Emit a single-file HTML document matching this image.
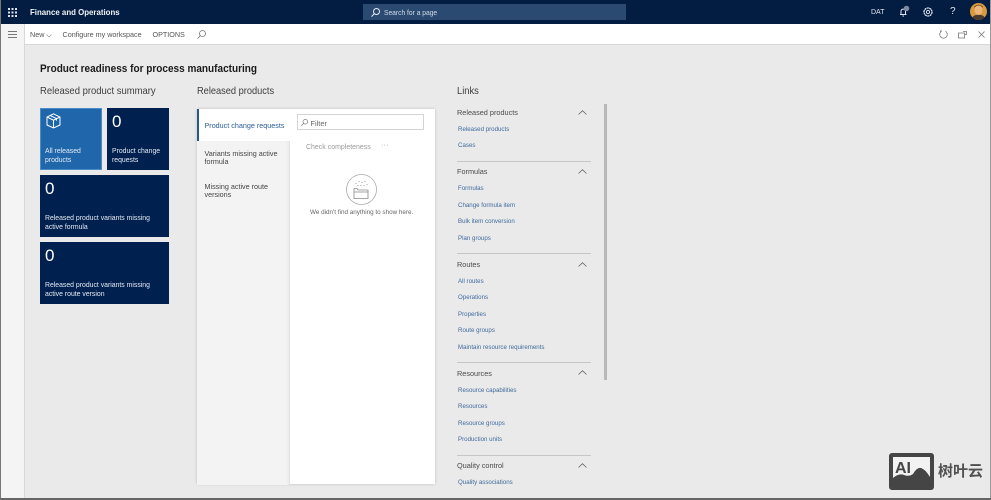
<!DOCTYPE html>
<html lang="en"><head><meta charset="utf-8"><title>Product readiness</title>
<style>
html,body{margin:0;padding:0;width:991px;height:500px;overflow:hidden;background:#eaeaea;font-family:"Liberation Sans","Noto Sans CJK SC",sans-serif}
.a{position:absolute}
.t{position:absolute;white-space:nowrap;line-height:1;transform-origin:left top}
.link{color:#3f6a9c;font-size:6.8px;transform:scaleX(.905)}
.grp{color:#4a4a4a;font-size:7.7px;transform:scaleX(.95)}
.hr{position:absolute;left:457px;width:134px;height:1px;background:#c6c6c6}
.tile{position:absolute;background:#002050}
.tile .n{position:absolute;left:5px;top:5px;font-size:17px;line-height:1;color:#fff}
.tile .l{position:absolute;left:5px;color:#e6ebf3;font-size:7.2px;line-height:9px;white-space:nowrap;transform:scaleX(.955);transform-origin:left top}
svg{position:absolute;overflow:visible}
</style></head><body>
<div class="a" style="left:0;top:0;width:991px;height:24px;background:#021c42"></div>
<svg style="left:8px;top:8px" width="9" height="9" fill="#dfe5ee"><rect x="0" y="0" width="2" height="2"/><rect x="3.5" y="0" width="2" height="2"/><rect x="7" y="0" width="2" height="2"/><rect x="0" y="3.5" width="2" height="2"/><rect x="3.5" y="3.5" width="2" height="2"/><rect x="7" y="3.5" width="2" height="2"/><rect x="0" y="7" width="2" height="2"/><rect x="3.5" y="7" width="2" height="2"/><rect x="7" y="7" width="2" height="2"/></svg>
<div class="t" style="left:30px;top:8px;color:#f2f4f8;font-size:8.4px;font-weight:bold;transform:scaleX(.94)">Finance and Operations</div>
<div class="a" style="left:363px;top:4px;width:263px;height:16px;background:#2a4a72"></div>
<svg style="left:371px;top:8px" width="9" height="9" fill="none" stroke="#e8edf4" stroke-width="1"><circle cx="5.5" cy="3.5" r="3"/><path d="M3.2 5.800L.5 8.600"/></svg>
<div class="t" style="left:384px;top:9px;color:#d5dde8;font-size:7.2px;transform:scaleX(.93)">Search for a page</div>
<div class="t" style="left:871px;top:9px;color:#e4e8ef;font-size:7px">DAT</div>
<svg style="left:899px;top:5px" width="12" height="13" fill="none" stroke="#dfe5ee" stroke-width="1"><path d="M1 9.500h6.500M2 9.500V6a2.300 2.300 0 0 1 4.500 0v3.500M3.500 11h1.500"/><circle cx="7.500" cy="3.500" r="2.800" fill="#7d8aa0" stroke="none"/></svg>
<svg style="left:923px;top:7px" width="10" height="10" fill="none" stroke="#dfe5ee"><circle cx="5" cy="5" r="4" stroke-width="1.300" stroke-dasharray="2 .5"/><circle cx="5" cy="5" r="1.600" stroke-width=".9"/></svg>
<div class="t" style="left:950px;top:7px;color:#dfe5ee;font-size:10px">?</div>
<svg style="left:970px;top:3px" width="17" height="17"><defs><clipPath id="c"><circle cx="8.500" cy="8.500" r="8.500"/></clipPath></defs><g clip-path="url(#c)"><rect width="17" height="17" fill="#d89a3c"/><ellipse cx="8.500" cy="7" rx="4" ry="4.800" fill="#eab57e"/><path d="M4 5Q8.500 0 13 5L12.500 3 8.500 1.500 4.500 3z" fill="#6d4520"/><path d="M1 17Q3 11 8.500 12 14 11 16 17z" fill="#4a3a30"/></g></svg>

<div class="a" style="left:0;top:24px;width:991px;background:#fff;border-bottom:1px solid #d8d8d8;box-sizing:border-box;height:21px"></div>
<div class="a" style="left:0;top:24px;width:25px;height:476px;background:#f4f4f4;border-right:1px solid #d8d8d8;box-sizing:border-box"></div>
<div class="a" style="left:8px;top:31px;width:9px;height:1px;background:#777"></div>
<div class="a" style="left:8px;top:34px;width:9px;height:1px;background:#777"></div>
<div class="a" style="left:8px;top:37px;width:9px;height:1px;background:#777"></div>
<div class="t" style="left:30px;top:31px;color:#555;font-size:7.200px">New</div>
<svg style="left:46px;top:34px" width="6" height="4" fill="none" stroke="#999" stroke-width=".7"><path d="M.5.500L3 3 5.500.500"/></svg>
<div class="t" style="left:62.500px;top:31px;color:#555;font-size:7.200px">Configure my workspace</div>
<div class="t" style="left:152.500px;top:31px;color:#555;font-size:7.200px">OPTIONS</div>
<svg style="left:197px;top:30px" width="9" height="9" fill="none" stroke="#777" stroke-width=".8"><circle cx="5.500" cy="3.500" r="3"/><path d="M3.200 5.800L.5 8.600"/></svg>
<svg style="left:939px;top:30px" width="9" height="9" fill="none" stroke="#777" stroke-width=".8"><path d="M6.500 1.200A3.800 3.800 0 1 1 2.500 1.200M2.500 1.200L1.700 0M2.500 1.200L1 1.800"/></svg>
<svg style="left:958px;top:31px" width="9" height="8" fill="none" stroke="#777" stroke-width=".8"><path d="M.5 2h6v5h-6zM6.500 3.500H8.500V.5H5"/></svg>
<svg style="left:978px;top:31px" width="7" height="7" fill="none" stroke="#777" stroke-width=".8"><path d="M.5.500l6 6M6.500.500l-6 6"/></svg>

<div class="t" style="left:39.500px;top:64px;color:#1a1a1a;font-size:11.200px;font-weight:bold;transform:scaleX(.895)">Product readiness for process manufacturing</div>
<div class="t" style="left:40px;top:87px;color:#3d3d3d;font-size:10.400px;transform:scaleX(.91)">Released product summary</div>
<div class="t" style="left:197px;top:87px;color:#3d3d3d;font-size:10.400px;transform:scaleX(.89)">Released products</div>
<div class="t" style="left:457px;top:87px;color:#3d3d3d;font-size:10.400px;transform:scaleX(.9)">Links</div>

<div class="tile" style="left:40px;top:108px;width:62px;height:62px;background:#1f66ab;box-shadow:inset 0 0 0 1px #4b8bc7">
<svg style="left:6px;top:5px" width="15" height="16" fill="none" stroke="#fff" stroke-width="1"><path d="M7.500.8L14 4v8L7.500 15 1 12V4zM1 4l6.500 3.200L14 4M7.500 7.200V15M4 2.400l6.500 3.200v2"/></svg>
<div class="l" style="top:38px">All released<br>products</div></div>
<div class="tile" style="left:107px;top:108px;width:62px;height:62px"><div class="n">0</div><div class="l" style="top:38px">Product change<br>requests</div></div>
<div class="tile" style="left:40px;top:175px;width:129px;height:61.500px"><div class="n">0</div><div class="l" style="top:38px">Released product variants missing<br>active formula</div></div>
<div class="tile" style="left:40px;top:242px;width:129px;height:62px"><div class="n">0</div><div class="l" style="top:38px">Released product variants missing<br>active route version</div></div>

<div class="a" style="left:197px;top:109px;width:238px;height:375px;background:#fff;box-shadow:0 0 3px rgba(0,0,0,.18)"></div>
<div class="a" style="left:197px;top:141px;width:93px;height:344px;background:#f3f3f3;box-shadow:inset -3px 0 3px -2px rgba(0,0,0,.1)"></div>
<div class="a" style="left:197px;top:109px;width:2px;height:32px;background:#245a92"></div>
<div class="t" style="left:204.500px;top:121.500px;color:#2a5d95;font-size:7.200px">Product change requests</div>
<div class="t" style="left:204.500px;top:149.500px;color:#444;font-size:7.200px;line-height:8.500px;white-space:nowrap">Variants missing active<br>formula</div>
<div class="t" style="left:204.500px;top:182.500px;color:#444;font-size:7.200px;line-height:8.500px">Missing active route<br>versions</div>
<div class="a" style="left:297px;top:114px;width:127px;height:16px;background:#fff;border:1px solid #d4d4d4;box-sizing:border-box"></div>
<svg style="left:301px;top:119px" width="7" height="7" fill="none" stroke="#777" stroke-width=".7"><circle cx="4.300" cy="2.700" r="2.300"/><path d="M2.600 4.400L.4 6.600"/></svg>
<div class="t" style="left:310.500px;top:120px;color:#666;font-size:7.400px">Filter</div>
<div class="t" style="left:306px;top:143px;color:#9a9a9a;font-size:7.500px;transform:scaleX(.93)">Check completeness</div>
<div class="t" style="left:381px;top:142px;color:#999;font-size:7px;letter-spacing:.3px">···</div>
<svg style="left:346px;top:174px" width="32" height="32" fill="none" stroke="#8a8a8a" stroke-width=".8"><circle cx="15.500" cy="15.500" r="15" stroke="#aaa"/><path d="M8 14.500h3l1 1.500h10v8.500H8zM8 18h14"/><path d="M10 9v1M13 7v1M16 8v1M19 7v1M21 10v1M12 11v1M15 11v1M18 11v1" stroke-dasharray="1 .5"/></svg>
<div class="t" style="left:310px;top:210px;color:#666;font-size:6.700px;transform:scaleX(.945)">We didn't find anything to show here.</div>

<div class="a" style="left:604px;top:104px;width:3px;height:276px;background:#b9b9b9"></div>

<div class="t grp" style="left:457px;top:109px">Released products</div>
<div class="t link" style="left:458px;top:127px">Released products</div>
<div class="t link" style="left:458px;top:143px">Cases</div>
<div class="hr" style="top:161px"></div>
<div class="t grp" style="left:457px;top:168px">Formulas</div>
<div class="t link" style="left:458px;top:186px">Formulas</div>
<div class="t link" style="left:458px;top:203px">Change formula item</div>
<div class="t link" style="left:458px;top:219px">Bulk item conversion</div>
<div class="t link" style="left:458px;top:236px">Plan groups</div>
<div class="hr" style="top:253px"></div>
<div class="t grp" style="left:457px;top:261px">Routes</div>
<div class="t link" style="left:458px;top:279px">All routes</div>
<div class="t link" style="left:458px;top:295px">Operations</div>
<div class="t link" style="left:458px;top:312px">Properties</div>
<div class="t link" style="left:458px;top:328px">Route groups</div>
<div class="t link" style="left:458px;top:345px">Maintain resource requirements</div>
<div class="hr" style="top:362px"></div>
<div class="t grp" style="left:457px;top:370px">Resources</div>
<div class="t link" style="left:458px;top:388px">Resource capabilities</div>
<div class="t link" style="left:458px;top:404px">Resources</div>
<div class="t link" style="left:458px;top:421px">Resource groups</div>
<div class="t link" style="left:458px;top:437px">Production units</div>
<div class="hr" style="top:455px"></div>
<div class="t grp" style="left:457px;top:462px">Quality control</div>
<div class="t link" style="left:458px;top:480px">Quality associations</div>
<svg style="left:578px;top:110px" width="9" height="5" fill="none" stroke="#666" stroke-width=".8"><path d="M.5 4.500L4.500.7 8.500 4.500"/></svg>
<svg style="left:578px;top:169px" width="9" height="5" fill="none" stroke="#666" stroke-width=".8"><path d="M.5 4.500L4.500.7 8.500 4.500"/></svg>
<svg style="left:578px;top:261.500px" width="9" height="5" fill="none" stroke="#666" stroke-width=".8"><path d="M.5 4.500L4.500.7 8.500 4.500"/></svg>
<svg style="left:578px;top:370px" width="9" height="5" fill="none" stroke="#666" stroke-width=".8"><path d="M.5 4.500L4.500.7 8.500 4.500"/></svg>
<svg style="left:578px;top:463px" width="9" height="5" fill="none" stroke="#666" stroke-width=".8"><path d="M.5 4.500L4.500.7 8.500 4.500"/></svg>

<div class="a" style="left:0;top:0;width:1px;height:500px;background:#777"></div>
<div class="a" style="left:990px;top:0;width:1px;height:500px;background:#999"></div>
<div class="a" style="left:0;top:498px;width:991px;height:2px;background:#666"></div>

<svg style="left:889px;top:453px" width="45" height="37"><rect width="45" height="37" rx="3" fill="#454545"/><rect x="4" y="4" width="37" height="25" fill="#f2f2f2"/><path d="M4 29V25Q10 20 15 22T24 21Q28 14 32 15T41 24V29z" fill="#454545"/><text x="6" y="20" font-family="Liberation Sans" font-weight="bold" font-size="16" fill="#454545">AI</text></svg>
<div class="t" style="left:938px;top:464px;color:#505050;font-size:15px;font-weight:bold;font-family:'Liberation Sans','Noto Sans CJK SC',sans-serif">树叶云</div>
</body></html>
